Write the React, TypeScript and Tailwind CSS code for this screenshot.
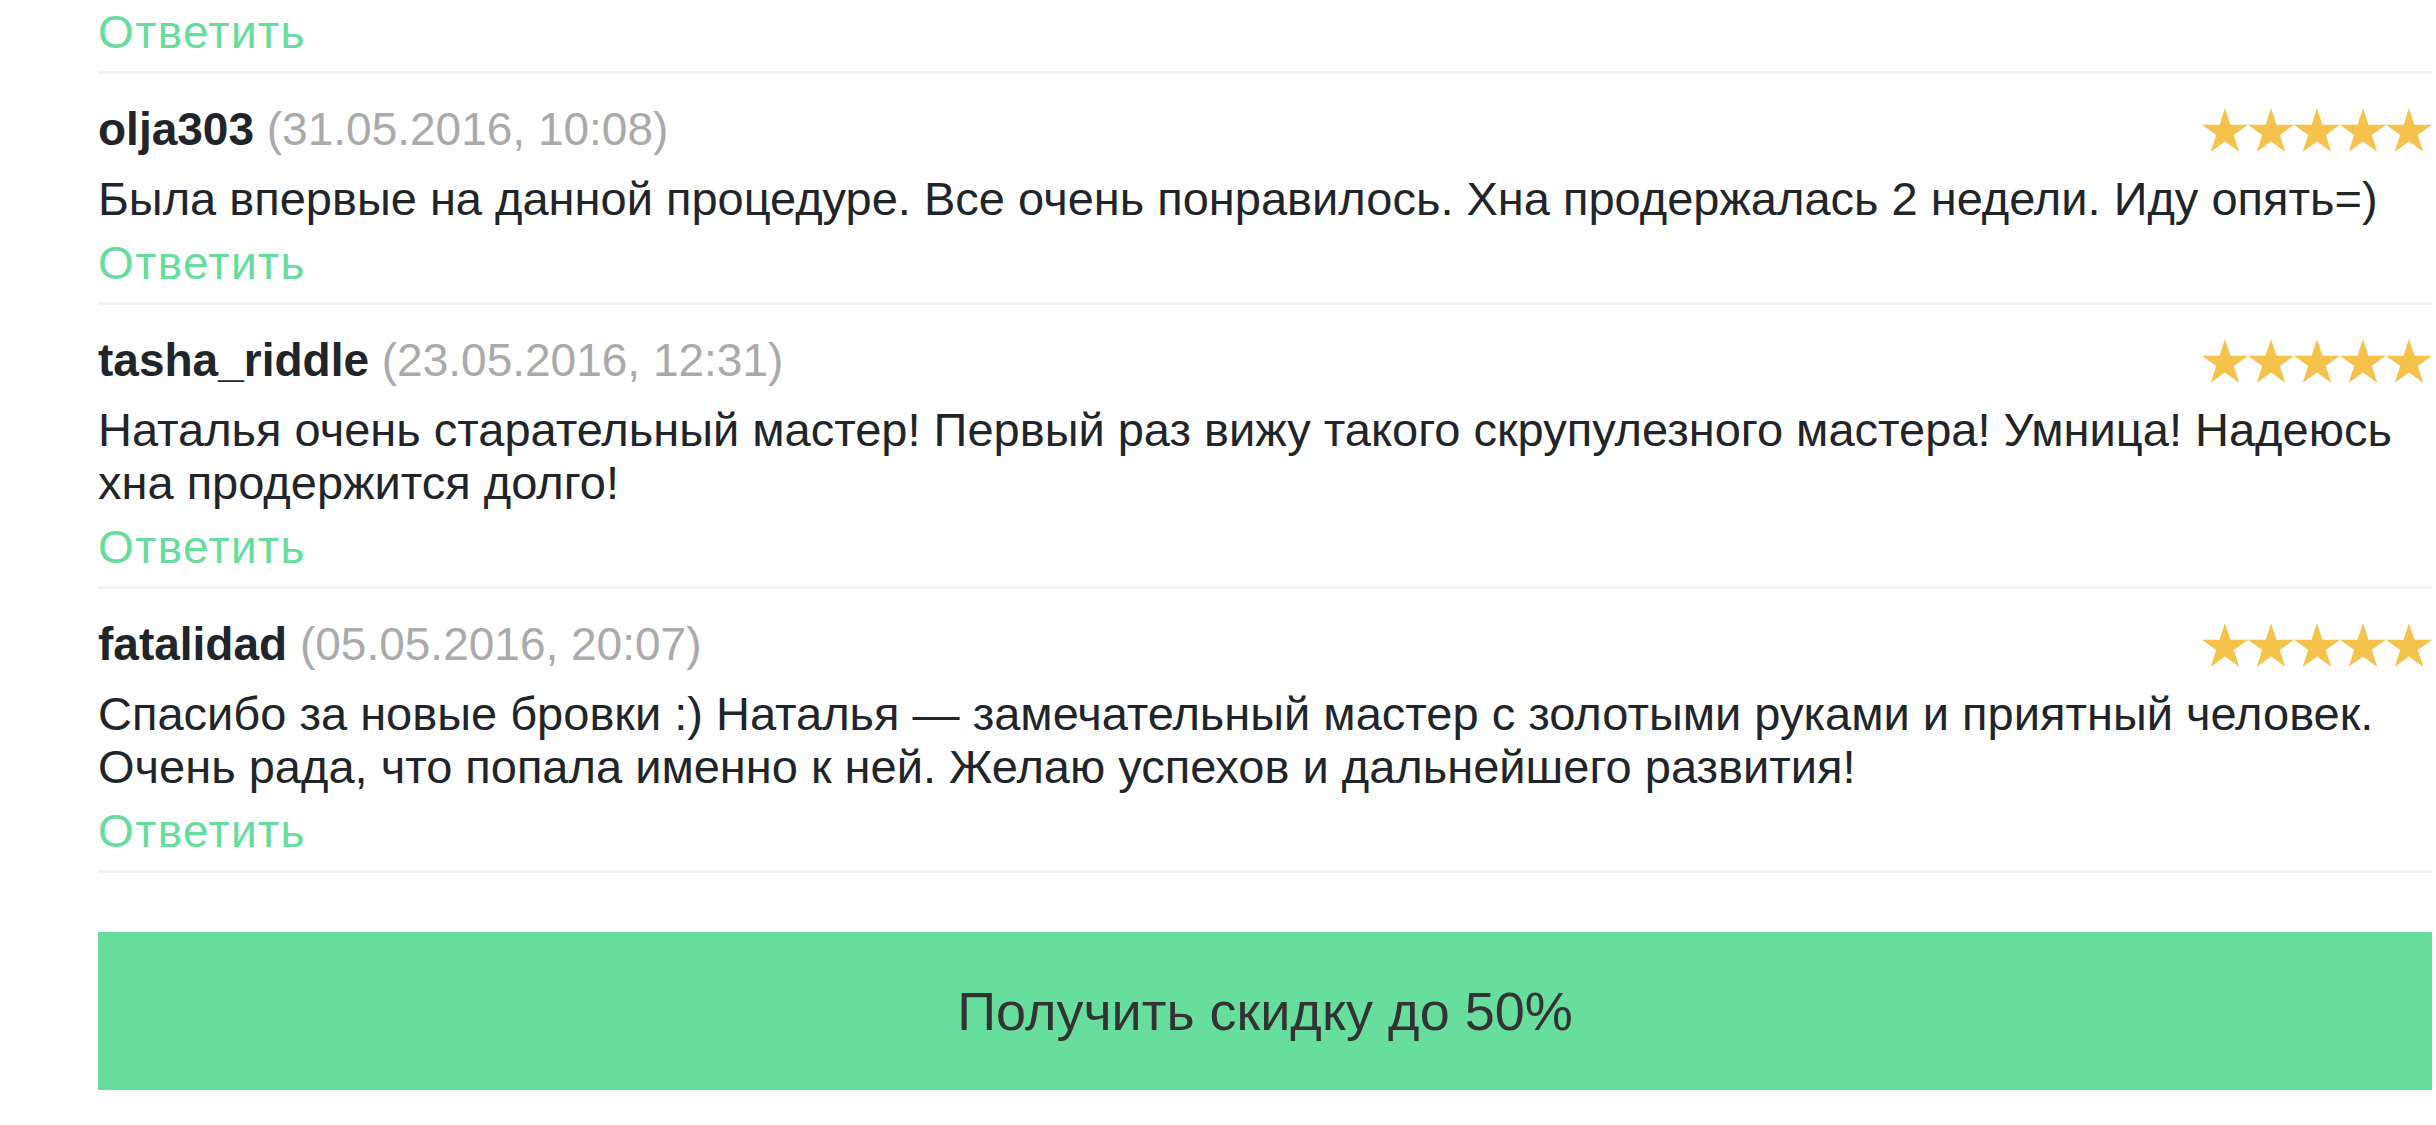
import React from "react";

interface Review {
  user: string;
  date: string;
  text: string;
}

const reviews: Review[] = [
  {
    user: "olja303",
    date: "(31.05.2016, 10:08)",
    text: "Была впервые на данной процедуре. Все очень понравилось. Хна продержалась 2 недели. Иду опять=)",
  },
  {
    user: "tasha_riddle",
    date: "(23.05.2016, 12:31)",
    text: "Наталья очень старательный мастер! Первый раз вижу такого скрупулезного мастера! Умница! Надеюсь хна продержится долго!",
  },
  {
    user: "fatalidad",
    date: "(05.05.2016, 20:07)",
    text: "Спасибо за новые бровки :) Наталья — замечательный мастер с золотыми руками и приятный человек. Очень рада, что попала именно к ней. Желаю успехов и дальнейшего развития!",
  },
];

const Star = () => (
  <svg width="46" height="44" viewBox="0 0 46 44" className="block">
    <polygon
      points="23,0 28.44,16.72 46,16.72 31.78,27.04 37.22,43.76 23,33.43 8.78,43.76 14.22,27.04 0,16.72 17.56,16.72"
      fill="#f5c34b"
    />
  </svg>
);

const Stars = () => (
  <div className="flex">
    {[0, 1, 2, 3, 4].map((i) => (
      <Star key={i} />
    ))}
  </div>
);

const ReplyLink = () => (
  <a href="#" className="block text-[#66dd9c] leading-[53px] tracking-[1.4px]">
    Ответить
  </a>
);

const ReviewItem = ({ user, date, text }: Review) => (
  <div className="pt-[29px] pb-[12px] border-b-[3px] border-[#f2f2f2]">
    <div className="flex items-center justify-between leading-[53px]">
      <div>
        <span className="font-bold text-[#212529]">{user}</span>{" "}
        <span className="text-[#aaaaaa]">{date}</span>
      </div>
      <Stars />
    </div>
    <p className="mt-[16px] text-[47px] leading-[53px] text-[#212529]">{text}</p>
    <div className="mt-[12px]">
      <ReplyLink />
    </div>
  </div>
);

export default function App() {
  return (
    <div
      className="min-h-[1125px] w-full bg-white pl-[98px] pr-[4px] text-[46px]"
      style={{ fontFamily: '"Liberation Sans", Arial, sans-serif' }}
    >
      <div className="pt-[6px] pb-[12px] border-b-[3px] border-[#f2f2f2]">
        <ReplyLink />
      </div>
      {reviews.map((r) => (
        <ReviewItem key={r.user} {...r} />
      ))}
      <button className="mt-[59px] flex h-[158px] w-full items-center justify-center bg-[#68de9e] text-[54px] text-[#333333]">
        Получить скидку до 50%
      </button>
    </div>
  );
}
